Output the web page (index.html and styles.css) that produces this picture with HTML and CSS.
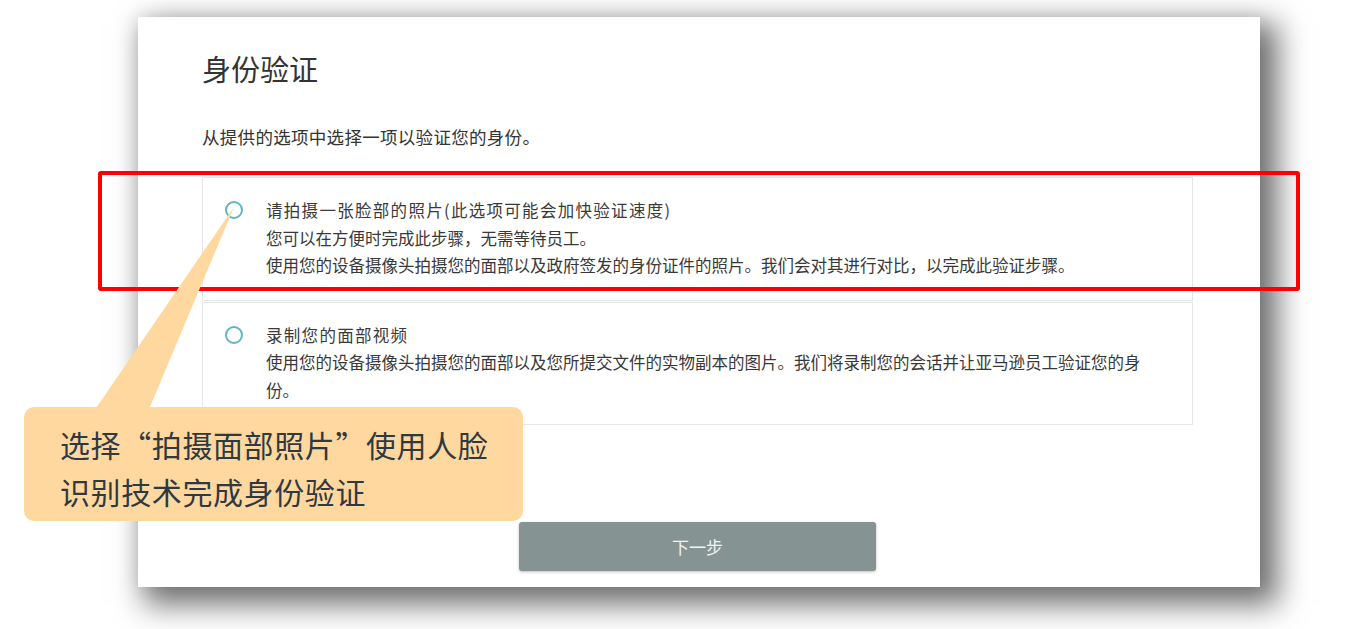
FILE: index.html
```html
<!DOCTYPE html>
<html lang="zh-CN">
<head>
  <meta charset="utf-8">
  <title>身份验证</title>
  <link rel="stylesheet" href="styles.css">
</head>
<body>
  <div class="page">
    <div class="card">
      <h1 class="title">身份验证</h1>
      <p class="intro">从提供的选项中选择一项以验证您的身份。</p>

      <div class="options">
        <label class="option">
          <span class="radio"></span>
          <span class="option-text">
            <span class="option-title">请拍摄一张脸部的照片(此选项可能会加快验证速度)</span>
            <span class="option-desc">您可以在方便时完成此步骤，无需等待员工。</span>
            <span class="option-desc">使用您的设备摄像头拍摄您的面部以及政府签发的身份证件的照片。我们会对其进行对比，以完成此验证步骤。</span>
          </span>
        </label>
        <label class="option">
          <span class="radio"></span>
          <span class="option-text">
            <span class="option-title">录制您的面部视频</span>
            <span class="option-desc">使用您的设备摄像头拍摄您的面部以及您所提交文件的实物副本的图片。我们将录制您的会话并让亚马逊员工验证您的身份。</span>
          </span>
        </label>
      </div>

      <button class="next-button">下一步</button>
    </div>

    <!-- annotation overlay -->
    <div class="highlight"></div>
    <svg class="pointer" width="240" height="420" viewBox="0 0 240 420">
      <polygon points="234,207 92,414 147,414" fill="#ffd89f"/>
    </svg>
    <div class="callout">选择“拍摄面部照片”使用人脸识别技术完成身份验证</div>
  </div>
</body>
</html>
```

FILE: styles.css
```css
body {
  margin: 0;
  background-color: #fff;
  color: #333;
  font-family: "Noto Sans CJK SC", "Noto Sans", sans-serif;
}

.page {
  position: relative;
  width: 1371px;
  height: 629px;
  padding: 17px 0 0 138px;
  box-sizing: border-box;
  overflow: hidden;
}

/* White panel with heavy drop shadow */
.card {
  width: 1122px;
  height: 570px;
  box-sizing: border-box;
  padding: 31px 67px 0 64px;
  background-color: #fff;
  box-shadow: 0 0 18px rgba(0, 0, 0, 0.07), 12px 12px 28px 6px rgba(0, 0, 0, 0.55);
}

.title {
  margin: 0;
  font-size: 29px;
  font-weight: normal;
  line-height: 40px;
  color: #333;
}

.intro {
  margin: 37px 0 0;
  font-size: 17.5px;
  letter-spacing: 0.3px;
  line-height: 24px;
  color: #333;
}

/* Option list */
.options {
  margin-top: 28px;
}

.option {
  display: flex;
  gap: 23px;
  padding: 19px 0 20px 22px;
  border: 1px solid #e6e6e6;
  cursor: pointer;
}

.option + .option {
  margin-top: 1px;
}

.radio {
  flex: none;
  width: 18px;
  height: 18px;
  margin-top: 4px;
  box-sizing: border-box;
  border: 2px solid #62b5bf;
  border-radius: 50%;
}

.option-text {
  width: 885px;
  display: flex;
  flex-direction: column;
  font-size: 16.5px;
  line-height: 27.5px;
  color: #383838;
}

.option-title {
  letter-spacing: 1.3px;
  color: #3a3a3a;
}

.next-button {
  display: block;
  width: 357px;
  height: 49px;
  margin: 97px auto 0;
  border: none;
  border-radius: 3px;
  background-color: #869393;
  color: #f2f2f2;
  font-family: inherit;
  font-size: 17px;
  box-shadow: 0 1px 3px rgba(0, 0, 0, 0.25);
}

/* Annotation: red frame, speech bubble */
.highlight {
  position: absolute;
  left: 98px;
  top: 171px;
  width: 1202px;
  height: 120px;
  box-sizing: border-box;
  border: 4px solid #ff0000;
  border-radius: 3px;
}

.pointer {
  position: absolute;
  left: 0;
  top: 0;
}

.callout {
  position: absolute;
  left: 24px;
  top: 407px;
  width: 499px;
  height: 114px;
  box-sizing: border-box;
  padding: 14px 30px 0 36px;
  border-radius: 10px;
  background-color: #ffd89f;
  color: #2f3942;
  font-size: 30px;
  letter-spacing: 0.6px;
  line-height: 47px;
}
```
